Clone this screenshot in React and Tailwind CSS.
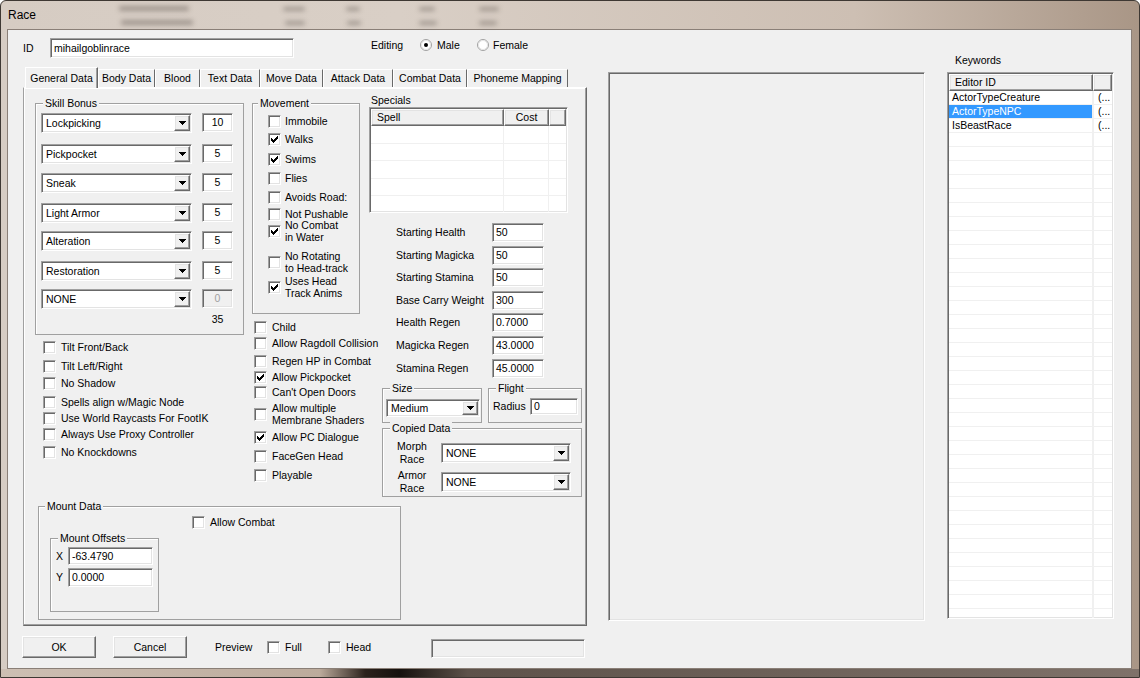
import React from "react";

// classic win32 3d borders
const sunken =
  "border border-t-[#a0a0a0] border-l-[#a0a0a0] border-b-white border-r-white shadow-[inset_1px_1px_0_#696969,inset_-1px_-1px_0_#e3e3e3]";
const raised =
  "border border-t-white border-l-white border-b-[#696969] border-r-[#696969] shadow-[inset_-1px_-1px_0_#a0a0a0,inset_1px_1px_0_#e3e3e3]";

const Arrow = () => (
  <svg width="7" height="4" viewBox="0 0 7 4" shapeRendering="crispEdges">
    <path d="M0 0h7v1h-1v1h-1v1h-1v1h-1v-1h-1v-1h-1v-1h-1z" fill="#000" />
  </svg>
);

const Combo = ({ value, cls }) => (
  <div className={`${sunken} bg-white p-[1px] flex ${cls}`}>
    <div className="flex-1 pl-[3px] flex items-center whitespace-nowrap overflow-hidden">{value}</div>
    <div className={`${raised} bg-[#f0f0f0] w-[16px] flex items-center justify-center`}>
      <Arrow />
    </div>
  </div>
);

const Field = ({ value, cls = "", align = "pl-[3px]" }) => (
  <div className={`${sunken} bg-white flex items-center whitespace-nowrap ${align} ${cls}`}>{value}</div>
);

const Check = ({ on }) => (
  <span className={`w-[13px] h-[13px] shrink-0 bg-white ${sunken} flex items-center justify-center`}>
    {on && (
      <svg width="7" height="7" viewBox="0 0 7 7" shapeRendering="crispEdges">
        <path d="M0 2h1v1h1v1h1v-1h1v-1h1v-1h1v-1h1v3h-1v1h-1v1h-1v1h-1v1h-1v-1h-1v-1h-1v-1h-1z" fill="#000" />
      </svg>
    )}
  </span>
);

const CheckRow = ({ label, on, cls = "", gap = "gap-[5px]" }) => {
  const lines = Array.isArray(label) ? label : [label];
  return (
    <div className={`flex items-center ${gap} ${cls}`}>
      <Check on={on} />
      <span className={`whitespace-nowrap ${lines.length > 1 ? "leading-[12px]" : "leading-[13px]"}`}>
        {lines.map((l) => (
          <div key={l}>{l}</div>
        ))}
      </span>
    </div>
  );
};

const Radio = ({ on }) => (
  <svg width="12" height="12" viewBox="0 0 12 12">
    <circle cx="6" cy="6" r="5.5" fill="#fff" stroke="#a0a0a0" />
    <circle cx="6" cy="6" r="4.5" fill="none" stroke="#e3e3e3" />
    {on && <circle cx="6" cy="6" r="2" fill="#000" />}
  </svg>
);

const Group = ({ title, cls = "", titleCls = "ml-[7px]", children }) => (
  <div className={`border border-[#a0a0a0] shadow-[inset_1px_1px_0_#fff] ${cls}`}>
    <div className={`-mt-[7px] w-fit bg-[#f0f0f0] px-[2px] leading-[13px] whitespace-nowrap ${titleCls}`}>{title}</div>
    {children}
  </div>
);

const skills = [
  { name: "Lockpicking", val: "10", cls: "mt-[3px]" },
  { name: "Pickpocket", val: "5", cls: "mt-[11px]" },
  { name: "Sneak", val: "5", cls: "mt-[9px]" },
  { name: "Light Armor", val: "5", cls: "mt-[10px]" },
  { name: "Alteration", val: "5", cls: "mt-[8px]" },
  { name: "Restoration", val: "5", cls: "mt-[10px]" },
  { name: "NONE", val: "0", cls: "mt-[8px]", off: true },
];

const leftChecks = [
  { label: "Tilt Front/Back", cls: "mt-[6px]" },
  { label: "Tilt Left/Right", cls: "mt-[6px]" },
  { label: "No Shadow", cls: "mt-[4px]" },
  { label: "Spells align w/Magic Node", cls: "mt-[6px]" },
  { label: "Use World Raycasts For FootIK", cls: "mt-[3px]" },
  { label: "Always Use Proxy Controller", cls: "mt-[3px]" },
  { label: "No Knockdowns", cls: "mt-[5px]" },
];

const movement = [
  { label: "Immobile", cls: "mt-[5px]" },
  { label: "Walks", on: true, cls: "mt-[5px]" },
  { label: "Swims", on: true, cls: "mt-[7px]" },
  { label: "Flies", cls: "mt-[6px]" },
  { label: "Avoids Road:", cls: "mt-[6px]" },
  { label: "Not Pushable", cls: "mt-[4px]" },
  { label: ["No Combat", "in Water"], on: true, cls: "-mt-[2px]" },
  { label: ["No Rotating", "to Head-track"], cls: "mt-[7px]" },
  { label: ["Uses Head", "Track Anims"], on: true, cls: "mt-[1px]" },
];

const midChecks = [
  { label: "Child", cls: "mt-[7px]" },
  { label: "Allow Ragdoll Collision", cls: "mt-[3px]" },
  { label: "Regen HP in Combat", cls: "mt-[5px]" },
  { label: "Allow Pickpocket", on: true, cls: "mt-[3px]" },
  { label: "Can't Open Doors", cls: "mt-[2px]" },
  { label: ["Allow multiple", "Membrane Shaders"], cls: "mt-[3px]" },
  { label: "Allow PC Dialogue", on: true, cls: "mt-[5px]" },
  { label: "FaceGen Head", cls: "mt-[6px]" },
  { label: "Playable", cls: "mt-[6px]" },
];

const stats = [
  { label: "Starting Health", val: "50", cls: "mt-[10px]" },
  { label: "Starting Magicka", val: "50", cls: "mt-[4px]" },
  { label: "Starting Stamina", val: "50", cls: "mt-[3px]" },
  { label: "Base Carry Weight", val: "300", cls: "mt-[4px]" },
  { label: "Health Regen", val: "0.7000", cls: "mt-[3px]" },
  { label: "Magicka Regen", val: "43.0000", cls: "mt-[4px]" },
  { label: "Stamina Regen", val: "45.0000", cls: "mt-[4px]" },
];

const tabs = [
  { name: "General Data", w: "w-[73px]", active: true },
  { name: "Body Data", w: "w-[57px]" },
  { name: "Blood", w: "w-[45px]" },
  { name: "Text Data", w: "w-[60px]" },
  { name: "Move Data", w: "w-[63px]" },
  { name: "Attack Data", w: "w-[70px]" },
  { name: "Combat Data", w: "w-[74px]" },
  { name: "Phoneme Mapping", w: "w-[101px]" },
];

const keywords = ["ActorTypeCreature", "ActorTypeNPC", "IsBeastRace"];

// blurred window contents behind the glass title bar
const blobs = [
  "left-[118px] top-[5px] w-[70px] h-[5px]",
  "left-[120px] top-[19px] w-[72px] h-[5px]",
  "left-[282px] top-[6px] w-[22px] h-[4px]",
  "left-[284px] top-[20px] w-[20px] h-[4px]",
  "left-[345px] top-[6px] w-[14px] h-[4px]",
  "left-[346px] top-[20px] w-[14px] h-[4px]",
  "left-[418px] top-[6px] w-[16px] h-[4px]",
  "left-[418px] top-[20px] w-[18px] h-[4px]",
  "left-[478px] top-[6px] w-[20px] h-[4px]",
  "left-[478px] top-[20px] w-[18px] h-[4px]",
];

function GeneralTab() {
  return (
    <div className="w-[564px] h-[539px] border border-t-white border-l-[#a0a0a0] border-b-[#696969] border-r-[#696969] shadow-[inset_-1px_-1px_0_#a0a0a0,inset_1px_1px_0_#fff]">
      <div className="flex h-[418px]">
        {/* column A */}
        <div className="ml-[11px] w-[209px] flex flex-col">
          <Group title="Skill Bonus" cls="mt-[15px] h-[232px]">
            <div className="flex flex-col pl-[5px]">
              {skills.map((s) => (
                <div key={s.name} className={`flex items-start ${s.cls}`}>
                  <Combo value={s.name} cls="w-[151px] h-[20px]" />
                  <Field
                    value={s.val}
                    align="justify-center"
                    cls={`ml-[10px] w-[31px] h-[19px] ${s.off ? "bg-[#f0f0f0]! text-[#a0a0a0]" : ""}`}
                  />
                </div>
              ))}
              <div className="mt-[4px] ml-[161px] w-[31px] text-center leading-[13px]">35</div>
            </div>
          </Group>
          <div className="flex flex-col pl-[8px]">
            {leftChecks.map((c) => (
              <CheckRow key={c.label} label={c.label} cls={`h-[13px] ${c.cls}`} />
            ))}
          </div>
        </div>

        {/* column B */}
        <div className="ml-[8px] w-[117px] flex flex-col">
          <Group title="Movement" titleCls="ml-[5px]" cls="mt-[15px] w-[108px] h-[211px]">
            <div className="flex flex-col pl-[15px]">
              {movement.map((c) => (
                <CheckRow key={c.label} label={c.label} on={c.on} gap="gap-[4px]" cls={c.cls} />
              ))}
            </div>
          </Group>
          <div className="flex flex-col pl-[2px]">
            {midChecks.map((c) => (
              <CheckRow key={c.label} label={c.label} on={c.on} cls={c.cls} />
            ))}
          </div>
        </div>

        {/* column C */}
        <div className="w-[214px] flex flex-col">
          <div className="mt-[6px] ml-[2px] leading-[13px]">Specials</div>
          <div className={`w-[199px] h-[106px] ${sunken} bg-white p-[1px] flex flex-col overflow-hidden`}>
            <div className="flex h-[17px] shrink-0">
              <div className={`${raised} bg-[#f0f0f0] w-[133px] pl-[5px] flex items-center`}>Spell</div>
              <div className={`${raised} bg-[#f0f0f0] w-[45px] flex items-center justify-center`}>Cost</div>
              <div className={`${raised} bg-[#f0f0f0] flex-1`} />
            </div>
            {[0, 1, 2, 3, 4].map((r) => (
              <div key={r} className="flex h-[17.5px] shrink-0 border-b border-[#f0f0f0]">
                <div className="w-[133px] border-r border-[#f0f0f0]" />
                <div className="w-[45px] border-r border-[#f0f0f0]" />
              </div>
            ))}
          </div>
          {stats.map((s) => (
            <div key={s.label} className={`flex items-center h-[19px] ${s.cls}`}>
              <div className="ml-[27px] w-[96px] whitespace-nowrap">{s.label}</div>
              <Field value={s.val} cls="w-[52px] h-[19px]" />
            </div>
          ))}
          <div className="flex mt-[10px]">
            <Group title="Size" cls="ml-[13px] w-[100px] h-[35px]">
              <Combo value="Medium" cls="ml-[3px] mt-[4px] w-[94px] h-[18px]" />
            </Group>
            <Group title="Flight" cls="ml-[6px] w-[94px] h-[35px]">
              <div className="flex items-center pl-[4px] mt-[3px]">
                <span className="w-[37px]">Radius</span>
                <Field value="0" cls="w-[48px] h-[17px]" />
              </div>
            </Group>
          </div>
          <Group title="Copied Data" cls="mt-[5px] ml-[13px] w-[200px] h-[69px]">
            <div className="flex items-center h-[20px] mt-[8px]">
              <div className="w-[58px] text-center leading-[13px]">
                Morph
                <br />
                Race
              </div>
              <Combo value="NONE" cls="w-[130px] h-[20px]" />
            </div>
            <div className="flex items-center h-[20px] mt-[9px]">
              <div className="w-[58px] text-center leading-[13px]">
                Armor
                <br />
                Race
              </div>
              <Combo value="NONE" cls="w-[130px] h-[20px]" />
            </div>
          </Group>
        </div>
      </div>

      <Group title="Mount Data" titleCls="ml-[6px]" cls="ml-[14px] w-[363px] h-[114px]">
        <CheckRow label="Allow Combat" cls="mt-[3px] ml-[153px] h-[13px]" />
        <Group title="Mount Offsets" cls="mt-[9px] ml-[11px] w-[109px] h-[74px]">
          <div className="flex items-center pl-[5px] mt-[2px]">
            <span className="w-[12px]">X</span>
            <Field value="-63.4790" cls="w-[85px] h-[18px]" />
          </div>
          <div className="flex items-center pl-[5px] mt-[3px]">
            <span className="w-[12px]">Y</span>
            <Field value="0.0000" cls="w-[85px] h-[19px]" />
          </div>
        </Group>
      </Group>
    </div>
  );
}

export default function App() {
  return (
    <div className="w-[1140px] h-[678px] overflow-hidden rounded-t-[6px] border border-[#3e3833] bg-[linear-gradient(90deg,#d6ccc3_0%,#d9cfc6_35%,#cdbfb3_75%,#a99686_100%)] font-['Liberation_Sans',Arial,sans-serif] text-[10.5px] leading-[13px] text-black">
      {/* title bar */}
      <div className="relative h-[28px] flex items-center pl-[7px]">
        {blobs.map((b) => (
          <div key={b} className={`absolute ${b} bg-[#5e554e]/45 blur-[2.5px] rounded-[2px]`} />
        ))}
        <span className="relative text-[12px]">Race</span>
      </div>

      {/* client area */}
      <div className="ml-[6px] w-[1125px] h-[640px] border border-[#8a7f77] bg-[#f0f0f0] flex">
        <div className="w-[579px] pl-[15px] flex flex-col">
          <div className="h-[38px] pt-[8px] flex items-start">
            <span className="w-[27px] leading-[20px]">ID</span>
            <Field value="mihailgoblinrace" cls="w-[244px] h-[20px]" />
            <div className="ml-[77px] h-[14px] flex items-center">
              <span className="w-[49px]">Editing</span>
              <Radio on />
              <span className="ml-[5px] w-[40px]">Male</span>
              <Radio />
              <span className="ml-[4px]">Female</span>
            </div>
          </div>

          <div className="h-[19px] flex items-end pl-[2px]">
            {tabs.map((t) => (
              <div
                key={t.name}
                className={`${t.w} flex items-center justify-center whitespace-nowrap border-t border-l border-r border-t-white border-l-white border-r-[#696969] ${
                  t.active
                    ? "h-[21px] -mb-[1px] relative bg-[#f0f0f0] shadow-[inset_-1px_0_0_#a0a0a0]"
                    : "h-[18px]"
                }`}
              >
                {t.name}
              </div>
            ))}
          </div>

          <GeneralTab />

          <div className="mt-[10px] h-[22px] flex items-center">
            <div className={`${raised} bg-[#f0f0f0] -ml-[1px] w-[74px] h-[22px] flex items-center justify-center`}>OK</div>
            <div className={`${raised} bg-[#f0f0f0] ml-[17px] w-[74px] h-[22px] flex items-center justify-center`}>Cancel</div>
            <span className="ml-[28px] w-[52px]">Preview</span>
            <Check />
            <span className="ml-[5px] w-[43px]">Full</span>
            <Check />
            <span className="ml-[5px] w-[85px]">Head</span>
            <div className={`${sunken} w-[154px] h-[19px] mt-[3px]`} />
          </div>
        </div>

        {/* preview pane */}
        <div className={`ml-[21px] mt-[42px] w-[317px] h-[549px] ${sunken} bg-[#f0f0f0]`} />

        {/* keywords */}
        <div className="ml-[22px] w-[167px] flex flex-col">
          <div className="mt-[24px] h-[13px] pl-[8px]">Keywords</div>
          <div className={`mt-[5px] h-[547px] ${sunken} bg-white p-[1px] flex flex-col overflow-hidden`}>
            <div className="flex h-[17px] shrink-0">
              <div className={`${raised} bg-[#f0f0f0] w-[144px] pl-[5px] flex items-center`}>Editor ID</div>
              <div className={`${raised} bg-[#f0f0f0] flex-1`} />
            </div>
            {Array.from({ length: 39 }, (_, i) => keywords[i] || "").map((k, i) => (
              <div key={i} className="flex h-[14px] shrink-0 border-b border-[#f0f0f0] leading-[13px]">
                <div
                  className={`w-[144px] pl-[3px] border-r border-[#f0f0f0] whitespace-nowrap ${
                    i === 1 ? "bg-[#3399ff] text-white" : ""
                  }`}
                >
                  {k}
                </div>
                <div className="flex-1 pl-[4px] border-l border-[#f0f0f0]">{k ? "(..." : ""}</div>
              </div>
            ))}
          </div>
        </div>
      </div>

      {/* bottom frame */}
      <div className="h-[8px] bg-[linear-gradient(90deg,#cdbfb3_0%,#bcab9c_28%,#2b221c_32%,#15110e_35%,#5d524a_41%,#7f726a_100%)]" />
    </div>
  );
}
